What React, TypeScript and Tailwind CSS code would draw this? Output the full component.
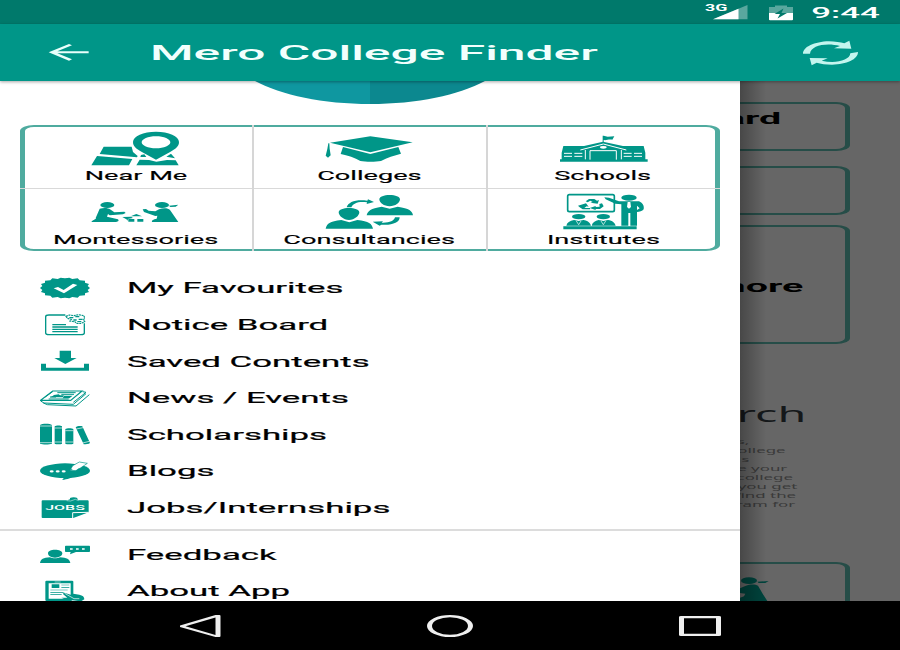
import type { ReactNode } from "react";

const G = "#009688";

type IconProps = { box: string; className?: string; children: ReactNode };

function Icon({ box, className = "", children }: IconProps) {
  return (
    <svg viewBox={box} preserveAspectRatio="none" fill={G} className={"block shrink-0 " + className}>
      {children}
    </svg>
  );
}

const nearMe = (
  <Icon box="271 28 276 108" className="h-9 w-[92px]">
    <path d="M312 78h84l4 16 14 12-2 4-112-10zM292 106l106 9-10 19H275zM424 103l10-2 6 8-18 0zM420 117l28 1 22 5 32-5 26 1 9 15H410zM500 108l14-9 12 14z" />
    <path fillRule="evenodd" d="M469 33c38 0 69 13 69 31 0 14-10 20-28 31l-41 22-41-22c-18-11-28-17-28-31 0-18 31-31 69-31zm0 14c-24 0-43 8-43 18s19 18 43 18 43-8 43-18-19-18-43-18z" />
  </Icon>
);

const colleges = (
  <Icon box="220 28 276 108" className="h-9 w-[92px]">
    <path d="M362 47l127 18-127 30-121-29z" />
    <path d="M280 79l82 21 84-21 8 20c-20 6-42 11-60 22-16 3-46 3-62 0-16-10-38-16-59-21z" />
    <path d="M236 68l3 0 1 16 3 20-8 7-7-6 5-20z" />
  </Icon>
);

const schools = (
  <Icon box="216 28 276 108" className="h-9 w-[92px]">
    <path d="M353 45h3l12 3 20-1-6 10c-12-2-18 3-26 1v8h-3z" />
    <path d="M235 76h62l57-13 60 13h62l5 20v20h7v7H225v-7h5V96z" />
    <g fill="none" stroke="#fff" strokeWidth="3">
      <path d="M286 88l69-18 69 18M301 88v28M409 88v28M315 117V90h79v27" />
      <path d="M237 98h24M268 98h24M237 107h24M268 107h24M416 98h24M447 98h24M416 107h24M447 107h24" />
    </g>
    <ellipse cx="355" cy="80" rx="10" ry="4" fill="#fff" />
  </Icon>
);

const montessori = (
  <Icon box="271 216 276 114" className="h-[38px] w-[92px]">
    <ellipse cx="323" cy="255" rx="21" ry="9" />
    <path d="M300 266c14-4 26-2 31 2l13 9 30-2 4 4-8 4-40 3-5-4-3 8 33 8c5 6-2 8-8 8h-72c4-6 18-10 13-12z" />
    <ellipse cx="487" cy="255" rx="21" ry="9" />
    <path d="M508 257l28-3-8 6-16 1zM478 268c14-5 28-3 33 2l25 36h-79c-2-5 4-8 14-10l2-9-6 1-34-12-4-8 10-1 8 5 20 2z" />
    <path d="M393 289l17-7 17 7zM368 291l26-1 6 4-16 3 2 6-6-5zM386 297h18v8h-18zM413 297h18v8h-18z" />
  </Icon>
);

const consultancies = (
  <Icon box="220 215 276 114" className="h-[38px] w-[92px]">
    <path d="M267 276c0-8 14-13 31-13s31 5 31 13c0 10-14 23-31 23s-31-13-31-23zM228 325c3-15 12-22 47-26l24 7 24-7c35 4 44 11 47 26z" />
    <path d="M389 237c0-8 14-13 31-13s31 5 31 13c0 10-14 21-31 21s-31-11-31-21zM351 285c3-13 12-21 45-26l24 6 24-6c35 5 44 13 46 26z" />
    <path d="M291 261c4-17 30-25 62-20l2-4 18 8-22 6 1-5c-24-4-42 2-47 15zM450 291c0 16-24 25-55 22l-5 3-21-12 31-1-4 4c23 1 37-5 40-16z" />
  </Icon>
);

const institutes = (
  <Icon box="216 215 276 114" className="h-[38px] w-[92px]">
    <rect x="248" y="223" width="140" height="51" rx="5" fill="none" stroke={G} strokeWidth="5" />
    <path d="M302 243l10-7h16l8 5 6-2-4 11-22-3 7-2-7-4-8 5zM279 256l24-7 8 10-6-1-7 5h17v4h-22l-10-7zM343 251l8-2 5 9-11 8h-13v3l-18-6 18-6v3l12-1z" />
    <ellipse cx="432" cy="232" rx="23" ry="9" />
    <path d="M358 231l14 1 30 11h60c12 5 16 15 14 24-4 6-13 8-20 8v41h-20v-38h-6v38h-21v-64l-18-2-29-13z" />
    <path d="M428 245h8l2 15-6 5-6-5zM456 256l8 8-8 5z" fill="#fff" />
    <path d="M235 318h220v9H235z" />
    <ellipse cx="281" cy="289" rx="20" ry="8" />
    <ellipse cx="355" cy="289" rx="20" ry="8" />
    <path d="M244 316c2-9 10-15 23-17l14 3 14-3c14 2 20 8 23 17zM320 316c2-9 10-15 21-17l14 3 14-3c14 2 20 8 23 17z" />
    <path d="M274 302l7 11 7-11M348 302l7 11 7-11" fill="none" stroke="#fff" strokeWidth="2" />
  </Icon>
);

const favourites = (
  <Icon box="60 18 150 72" className="h-6 w-[50px]">
    <path d="M135 25l13-2 9 4 16-2 6 6 16 1 0 6 12 4-4 6 7 6-7 6 4 6-12 4 0 6-16 1-6 6-16-2-9 4-13-2-13 2-9-4-16 2-6-6-16-1 0-6-12-4 4-6-7-6 7-6-4-6 12-4 0-6 16-1 6-6 16 2 9-4z" />
    <path d="M101 55l13-4 17 9 28-19 13 4-40 25z" fill="#fff" />
  </Icon>
);

const notice = (
  <Icon box="60 128 150 72" className="h-6 w-[50px]">
    <path d="M136 134H87c-6 0-10 2-10 5v49c0 3 4 5 10 5h96c6 0 10-2 10-5v-29" fill="none" stroke={G} strokeWidth="4" />
    <path d="M97 161h41v4H97zM97 168h76v4H97zM97 175h76v4H97zM97 182h76v4H97z" />
    <path d="M138 138l10-4 14 2 14-3 16 3 2 8-4 5 4 5-10 5-14 0-6-5-14-2 4-5-12-3z" fill="none" stroke={G} strokeWidth="3.5" strokeDasharray="6 2" />
    <path d="M148 140h12v4h-12zM166 137h12v4h-12zM160 147h10v4h-10zM176 145h12v4h-12zM172 152h12v3h-12z" />
  </Icon>
);

const saved = (
  <Icon box="60 238 150 72" className="h-6 w-[50px]">
    <path d="M119 243h34v22h17l-34 18-33-18h16zM63 282h15v12h114v-12h15v21H63z" />
  </Icon>
);

const news = (
  <Icon box="60 -43 150 72" className="h-6 w-[50px]">
    <g fill="none" stroke={G} strokeWidth="3.5">
      <path d="M98-28h88L152 0H62z" fill="#fff" />
      <path d="M62 2l10 6 88 4 38-32M70 8l12 5 86 4 40-34M188-26l10 2-38 30M74-9l24-17" strokeWidth="3" />
      <path d="M112-23h55M86-4h60M124-18h38M90-10h18" strokeWidth="3" />
    </g>
    <path d="M102-16l14-2 4 3 12 0-4 6-38 0 8-4zM132-14h26l-10 8h-20z" />
  </Icon>
);

const scholarships = (
  <Icon box="60 67 150 72" className="h-6 w-[50px]">
    <path d="M60 76c6-5 30-5 36 0v56c-8 3-28 3-36 0zM104 80c4-3 18-3 22 0v52c-4 2-18 2-22 0zM136 88c4-3 20-3 24 0v44c-4 2-20 2-24 0zM167 83c4-4 14-5 20-3l23 50c-4 3-12 4-19 4z" />
    <path d="M60 79h36M60 129h36M104 85h22M104 127h22M136 93h24M136 127h24M169 88l20-4M188 130l20-5" stroke="#fff" strokeWidth="2" />
  </Icon>
);

const blogs = (
  <Icon box="60 177 150 72" className="h-6 w-[50px]">
    <ellipse cx="135" cy="212" rx="75" ry="22" />
    <path d="M122 230l38-2c-6 6-16 10-34 12 4-3 6-6 4-9z" />
    <path d="M150 212l8-15 20-11 24 4-22 15z" fill="#fff" stroke={G} strokeWidth="2" />
    <path d="M152 211l8-11 16 5-8 6z" fill="#fff" />
    <path d="M151 212l2-5 6 3z" />
    <g fill="#fff">
      <ellipse cx="95" cy="214" rx="6" ry="3.5" />
      <ellipse cx="113" cy="214" rx="6" ry="3.5" />
      <ellipse cx="131" cy="214" rx="6" ry="3.5" />
    </g>
  </Icon>
);

const jobs = (
  <div className="relative h-6 w-[50px] shrink-0">
    <Icon box="60 287 150 72" className="h-6 w-[50px]">
      <path d="M70 300h72l8-3 0-4c6-3 16-3 22 0v4l4 3h25c4 0 5 1 5 3v33l-46 17H70c-4 0-5-1-5-3v-47c0-2 1-3 5-3z" />
      <path d="M158 353v-16l48-1" fill="none" stroke="#fff" strokeWidth="3" />
      <path d="M140 301l12 1 14-5 10 4" fill="none" stroke="#fff" strokeWidth="1.5" />
    </Icon>
    <span className="absolute left-[25px] top-[7px] -translate-x-1/2 scale-x-[2] text-[8px] font-medium leading-[9px] text-white">
      JOBS
    </span>
  </div>
);

const feedback = (
  <Icon box="60 66 150 72" className="h-6 w-[50px]">
    <path d="M84 100c0-7 9-11 21-11s22 4 22 11-9 13-22 13-21-6-21-13zM60 129c2-11 10-16 30-17 8 4 22 4 30 0 20 1 29 6 31 17z" />
    <path d="M139 77h67c3 0 4 1 4 3v13c0 2-1 3-4 3h-38l-18 7 2-7h-13c-3 0-4-1-4-3V80c0-2 1-3 4-3z" />
    <path d="M150 85h8v4h-8zM168 85h8v4h-8zM186 85h8v4h-8z" fill="#fff" />
  </Icon>
);

const about = (
  <Icon box="60 176 150 72" className="h-6 w-[50px]">
    <path fillRule="evenodd" d="M82 181h72c4 0 6 1 6 3v36l18 3c10 2 15 6 15 14l-10 6-26-3c-2 2-3 2-6 2H82c-4 0-6-1-6-3v-55c0-2 2-3 6-3zm4 8v46h46l-8-3h18l-14-12 5-3 19 6v-34z" />
    <path d="M95 192h23v11H95zM124 193h24v2h-24zM124 200h24v2h-24zM91 208h52v2H91zM91 215h40v2H91zM91 222h34v2H91z" />
    <path d="M134 219l28 16h16" fill="none" stroke="#fff" strokeWidth="2" />
    <path d="M104 185h18" stroke="#fff" strokeWidth="1.5" />
  </Icon>
);

const tiles = [
  { label: "Near Me", icon: nearMe },
  { label: "Colleges", icon: colleges },
  { label: "Schools", icon: schools },
  { label: "Montessories", icon: montessori },
  { label: "Consultancies", icon: consultancies },
  { label: "Institutes", icon: institutes },
];

const menu = [
  { label: "My Favourites", icon: favourites },
  { label: "Notice Board", icon: notice },
  { label: "Saved Contents", icon: saved },
  { label: "News / Events", icon: news },
  { label: "Scholarships", icon: scholarships },
  { label: "Blogs", icon: blogs },
  { label: "Jobs/Internships", icon: jobs },
];

const more = [
  { label: "Feedback", icon: feedback },
  { label: "About App", icon: about },
];

const blurb = [
  { text: "s,", inset: "pr-[151px]" },
  { text: "ollege", inset: "pr-[114px]" },
  { text: "is", inset: "pr-[151px]" },
  { text: "e your", inset: "pr-[113px]" },
  { text: "college", inset: "pr-[107px]" },
  { text: "you get", inset: "pr-[103px]" },
  { text: "find the", inset: "pr-[104px]" },
  { text: "ram for", inset: "pr-[105px]" },
];

function MenuRow({ label, icon }: { label: string; icon: ReactNode }) {
  return (
    <div className="flex h-[36.6px] items-center pl-10">
      {icon}
      <span className="ml-[37px] mt-[1px] origin-left scale-x-[2.35] whitespace-nowrap text-[14.8px] leading-5 text-black [-webkit-text-stroke:0.2px_black]">
        {label}
      </span>
    </div>
  );
}

function StatusBar() {
  return (
    <div className="flex h-6 items-center justify-end bg-[#00796b] pr-[20px]">
      <div className="relative h-6 w-[46px]">
        <svg viewBox="0 0 46 24" className="block h-6 w-[46px]">
          <path d="M9 19.3L43.500 5v14.300z" fill="#fff" opacity=".35" />
          <path d="M9 19.300L34.500 8.700v10.600z" fill="#fff" />
        </svg>
        <span className="absolute left-[1px] top-[4px] origin-left scale-x-[2.1] text-[8.5px] font-bold leading-[9px] text-white">
          3G
        </span>
      </div>
      <svg viewBox="0 0 24 16" className="ml-[19px] mt-px h-4 w-6">
        <path d="M0 2h6V.5h12V2h6v6H0z" fill="#fff" opacity=".35" />
        <path d="M0 8h24v6.500q0 .8-1 .8H1q-1 0-1-.8z" fill="#fff" />
        <path d="M14.500 3.500L5.500 9h5.500l-2.500 4.500L18 8h-5.500z" fill="#00796b" />
      </svg>
      <div className="ml-[18px] flex w-[69px] justify-center">
        <span className="mt-px scale-x-[2.36] text-[14.8px] font-medium leading-6 text-white">9:44</span>
      </div>
    </div>
  );
}

function Header() {
  return (
    <div className="relative z-10 flex h-[57px] items-center bg-[#009688] pl-[47px] pr-[39px] shadow-[0_1px_3px_rgba(0,0,0,0.35)]">
      <svg viewBox="140 129 132 60" preserveAspectRatio="none" className="h-5 w-11">
        <path d="M145 157l61-25 9 4-44 18h94v6h-94l44 18-9 4z" fill="#e9fffb" />
      </svg>
      <span className="ml-[59px] mt-px origin-left scale-x-[2.37] whitespace-nowrap text-[21px] font-medium leading-6 text-[#f2fffd]">
        Mero College Finder
      </span>
      <svg viewBox="1054 116 180 84" preserveAspectRatio="none" className="ml-auto h-7 w-[60px]" fill="#c4f5ee">
        <path d="M1060 160c0-20 34-36 78-37 18 0 34 3 46 6l15-8 6 24-52-1 18-7c-40-11-88-2-90 23z" />
        <path d="M1225 155c0 22-34 37-78 38-18 0-34-3-46-6l-15 8-6-22 54 1-18 7c40 10 84 0 86-22z" />
      </svg>
    </div>
  );
}

function Drawer() {
  return (
    <div className="relative z-[5] h-full w-[740px] shrink-0 overflow-hidden bg-white">
      <svg viewBox="0 0 230 23" className="mx-auto block h-[23px] w-[230px]">
        <path d="M0 0H115V23C68 23 26 14 0 0z" fill="#0f97a0" />
        <path d="M115 0H230C204 14 162 23 115 23z" fill="#0c888f" />
      </svg>
      <div className="relative mx-5 mt-[21px] h-[126px] rounded-[14px/6px] border-x-[5px] border-y-2 border-[#4fab9f]">
        <div className="-mx-[5px] grid grid-cols-[232px_234px_234px]">
          {tiles.map((t, i) => (
            <div
              key={t.label}
              className={"flex flex-col items-center pt-[3px] " + (i < 3 ? "h-[62px] gap-[1px]" : "h-[60px] gap-[3px]")}
            >
              <div className="flex h-[37px] items-start">{t.icon}</div>
              <span className="scale-x-[2.14] whitespace-nowrap text-[12.7px] leading-[15px] text-black [-webkit-text-stroke:0.15px_black]">
                {t.label}
              </span>
            </div>
          ))}
        </div>
        <div className="absolute -left-[5px] -right-[5px] top-[61px] h-px bg-[#d9d9d9]" />
        <div className="absolute -bottom-[2px] -top-[2px] left-[227px] w-[2px] bg-[#d6d6d6]" />
        <div className="absolute -bottom-[2px] -top-[2px] left-[461px] w-[2px] bg-[#d6d6d6]" />
      </div>
      <div className="mt-[18.7px]">
        {menu.map((m) => (
          <MenuRow key={m.label} label={m.label} icon={m.icon} />
        ))}
      </div>
      <div className="mt-[3px] h-[2px] bg-[#dcdcdc]" />
      <div className="mt-[5px]">
        {more.map((m) => (
          <MenuRow key={m.label} label={m.label} icon={m.icon} />
        ))}
      </div>
    </div>
  );
}

function Backdrop() {
  return (
    <div className="relative h-full flex-1 overflow-hidden bg-[#666]">
      <div className="mt-[21px] flex h-[49px] w-[110px] justify-end border-y-2 border-r-[5px] border-[#264d48] pr-[64px] [border-bottom-right-radius:14px_6px] [border-top-right-radius:14px_6px]">
        <span className="mt-[5px] origin-right scale-x-[2.46] text-[16px] font-bold leading-5 text-black">ard</span>
      </div>
      <div className="mt-[15px] h-[49px] w-[110px] border-y-2 border-r-[5px] border-[#264d48] [border-bottom-right-radius:14px_6px] [border-top-right-radius:14px_6px]" />
      <div className="mt-[10px] flex h-[119px] w-[110px] items-center justify-end border-y-2 border-r-[5px] border-[#264d48] pr-[42px] [border-bottom-right-radius:14px_6px] [border-top-right-radius:14px_6px]">
        <span className="mt-[5px] origin-right scale-x-[2.46] text-[16px] font-bold leading-5 text-black">more</span>
      </div>
      <div className="mt-[58px] flex h-6 justify-end pr-[94px]">
        <span className="origin-right scale-x-[2.22] font-['Noto_Sans'] text-[21px] leading-6 text-[#15181a]">rch</span>
      </div>
      <div className="mt-[11px]">
        {blurb.map((l, i) => (
          <div key={i} className={"flex h-[9px] justify-end " + l.inset}>
            <span className="origin-right scale-x-[2.35] whitespace-nowrap font-['Noto_Sans'] text-[7.2px] leading-[9px] text-[#3a3a3a]">
              {l.text}
            </span>
          </div>
        ))}
      </div>
      <div className="mt-[53px] h-[60px] w-[110px] border-y-2 border-r-[5px] border-[#264d48] [border-top-right-radius:14px_6px]">
        <svg viewBox="30 555 120 78" preserveAspectRatio="none" className="mt-[11px] h-[26px] w-10" fill="#00443d">
          <ellipse cx="57" cy="572" rx="24" ry="10" />
          <path d="M82 575l34-2-10 6-20 0zM46 588c16-6 30-5 38-1l14 24 14 22H30v-10l12-4 4-8-16-2v-14z" />
        </svg>
      </div>
      <div className="absolute inset-y-0 left-0 w-[26px] bg-gradient-to-r from-black/30 to-transparent" />
    </div>
  );
}

function NavBar() {
  return (
    <div className="flex h-[49px] items-center justify-between bg-black pl-[180px] pr-[179px]">
      <svg viewBox="0 0 41 22" className="h-[22px] w-[41px]" fill="#efefef">
        <path fillRule="evenodd" d="M0 10.500L35.500 0h4q1 0 1 1v20q0 1-1 1h-4L0 12zM5.500 11.200L35.500 20V2.500z" />
      </svg>
      <svg viewBox="0 0 46 22" className="h-[22px] w-[46px]" fill="#efefef">
        <path fillRule="evenodd" d="M23 0a23 11 0 0 1 0 22a23 11 0 0 1 0-22zm0 2.200a18 8.800 0 0 0 0 17.600a18 8.800 0 0 0 0-17.600z" />
      </svg>
      <svg viewBox="0 0 42 20" className="h-5 w-[42px]" fill="#efefef">
        <path fillRule="evenodd" d="M2 0h38q2 0 2 1v18q0 1-2 1H2q-2 0-2-1V1q0-1 2-1zm3 2.200v15.600h32V2.200z" />
      </svg>
    </div>
  );
}

export default function App() {
  return (
    <div className="flex h-[650px] w-[900px] flex-col overflow-hidden font-[Roboto,sans-serif]">
      <StatusBar />
      <Header />
      <div className="flex h-[520px] overflow-hidden">
        <Drawer />
        <Backdrop />
      </div>
      <NavBar />
    </div>
  );
}
